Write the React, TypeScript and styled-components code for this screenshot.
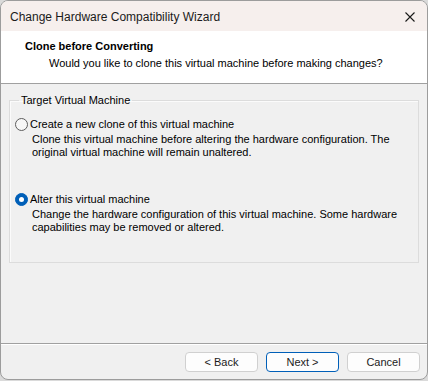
import React, { useState } from "react";
import styled, { createGlobalStyle } from "styled-components";

const GlobalStyle = createGlobalStyle`
  html, body {
    margin: 0;
    padding: 0;
    background: #dadada;
  }
  * {
    box-sizing: border-box;
  }
`;

const options = [
  {
    id: "clone",
    label: "Create a new clone of this virtual machine",
    description:
      "Clone this virtual machine before altering the hardware configuration. The original virtual machine will remain unaltered.",
  },
  {
    id: "alter",
    label: "Alter this virtual machine",
    description:
      "Change the hardware configuration of this virtual machine. Some hardware capabilities may be removed or altered.",
  },
];

const App = () => {
  const [choice, setChoice] = useState("alter");

  return (
    <>
      <GlobalStyle />
      <Window>
        <TitleBar>
          <Title>Change Hardware Compatibility Wizard</Title>
          <CloseButton aria-label="Close">
            <svg width="10" height="10" viewBox="0 0 10 10">
              <path d="M0.5 0.5 L9.5 9.5 M9.5 0.5 L0.5 9.5" stroke="#1a1a1a" strokeWidth="1.1" />
            </svg>
          </CloseButton>
        </TitleBar>
        <Header>
          <HeaderTitle>Clone before Converting</HeaderTitle>
          <HeaderSubtitle>
            Would you like to clone this virtual machine before making changes?
          </HeaderSubtitle>
        </Header>
        <Body>
          <GroupBox>
            <Legend>Target Virtual Machine</Legend>
            <OptionList>
              {options.map((o) => (
                <Option key={o.id} onClick={() => setChoice(o.id)}>
                  <OptionLabel>
                    <Radio $checked={choice === o.id} />
                    <span>{o.label}</span>
                  </OptionLabel>
                  <Description>{o.description}</Description>
                </Option>
              ))}
            </OptionList>
          </GroupBox>
        </Body>
        <Footer>
          <Button>&lt; Back</Button>
          <Button $primary>Next &gt;</Button>
          <Button>Cancel</Button>
        </Footer>
      </Window>
    </>
  );
};

export default App;

const Window = styled.div`
  width: 428px;
  height: 380px;
  display: flex;
  flex-direction: column;
  background: #f0f0f0;
  border: 1px solid #9c9c9c;
  border-radius: 8px;
  overflow: hidden;
  font-family: "Liberation Sans", Arial, sans-serif;
  font-size: 11px;
  color: #000;
`;

const TitleBar = styled.div`
  height: 30px;
  flex: none;
  display: flex;
  align-items: center;
  justify-content: space-between;
  padding: 0 10px 0 9px;
  background: #f6efed;
`;

const Title = styled.div`
  font-size: 12px;
  color: #1b1b1b;
  padding-top: 1px;
`;

const CloseButton = styled.div`
  width: 14px;
  height: 14px;
  display: flex;
  align-items: center;
  justify-content: center;
  margin-top: 1px;
`;

const Header = styled.div`
  height: 53px;
  flex: none;
  background: #ffffff;
  border-bottom: 1px solid #a0a0a0;
  padding: 8px 0 0 24px;
`;

const HeaderTitle = styled.div`
  font-weight: bold;
  line-height: 14px;
  color: #000;
`;

const HeaderSubtitle = styled.div`
  line-height: 14px;
  margin-top: 3px;
  padding-left: 24px;
`;

const Body = styled.div`
  flex: 1;
  padding: 10px 8px 0 8px;
`;

const GroupBox = styled.fieldset`
  margin: 0;
  height: 169px;
  padding: 11px 0 0 5px;
  border: 1px solid #dcdcdc;
  border-radius: 0;
  box-shadow: inset 1px 1px 0 #fbfbfb;
`;

const Legend = styled.legend`
  padding: 0 2px;
  margin-left: 4px;
  line-height: 13px;
`;

const OptionList = styled.div`
  display: flex;
  flex-direction: column;
  gap: 34px;
`;

const Option = styled.div`
  display: flex;
  flex-direction: column;
  cursor: default;
`;

const OptionLabel = styled.div`
  display: flex;
  align-items: center;
  gap: 2px;
  line-height: 13px;
`;

const Radio = styled.span<{ $checked?: boolean }>`
  width: 13px;
  height: 13px;
  flex: none;
  border-radius: 50%;
  background: ${(p) => (p.$checked ? "#005fb8" : "#f7f7f7")};
  border: 1px solid ${(p) => (p.$checked ? "#005fb8" : "#5d5d5d")};
  display: flex;
  align-items: center;
  justify-content: center;
  &::after {
    content: "";
    display: ${(p) => (p.$checked ? "block" : "none")};
    width: 5px;
    height: 5px;
    border-radius: 50%;
    background: #ffffff;
  }
`;

const Description = styled.div`
  line-height: 13px;
  margin-top: 2px;
  padding-left: 17px;
  padding-right: 6px;
`;

const Footer = styled.div`
  height: 36px;
  flex: none;
  display: flex;
  justify-content: flex-end;
  align-items: flex-start;
  gap: 8px;
  padding: 8px 7px 0 0;
  border-top: 1px solid #a0a0a0;
  box-shadow: inset 0 1px 0 #ffffff;
`;

const Button = styled.button<{ $primary?: boolean }>`
  width: 73px;
  height: 20px;
  padding: 0;
  font-family: inherit;
  font-size: 11px;
  color: #1b1b1b;
  background: #fdfdfd;
  border: 1px solid ${(p) => (p.$primary ? "#005fb8" : "#d0d0d0")};
  border-radius: 4px;
`;
